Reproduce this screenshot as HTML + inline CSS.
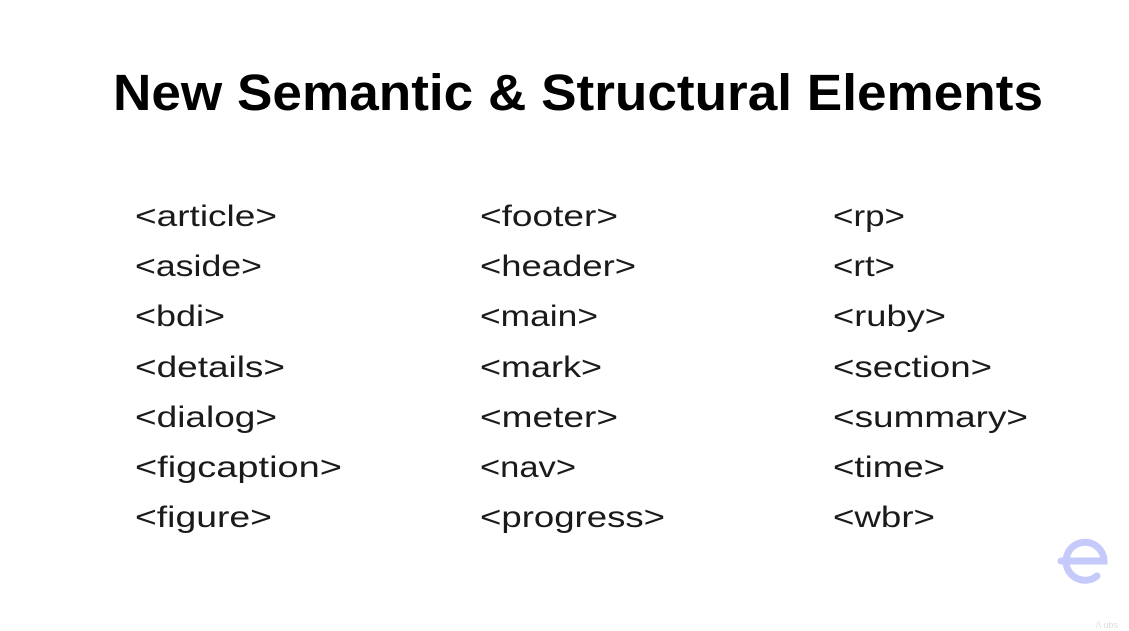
<!DOCTYPE html>
<html><head><meta charset="utf-8"><style>
html,body{margin:0;padding:0;background:#fff;width:1129px;height:631px;overflow:hidden}
svg{display:block}
text{font-family:"Liberation Sans",sans-serif}
.i{font-size:30px;fill:#1a1a1a;font-weight:normal}
</style></head><body>
<svg width="1129" height="631" viewBox="0 0 1129 631">
<text x="113" y="110" font-size="51" font-weight="bold" fill="#000" textLength="930" lengthAdjust="spacingAndGlyphs">New Semantic &amp; Structural Elements</text>
<g class="i">
<text class="i" x="135" y="226" textLength="142" lengthAdjust="spacingAndGlyphs">&lt;article&gt;</text>
<text class="i" x="135" y="276" textLength="127" lengthAdjust="spacingAndGlyphs">&lt;aside&gt;</text>
<text class="i" x="135" y="326" textLength="90" lengthAdjust="spacingAndGlyphs">&lt;bdi&gt;</text>
<text class="i" x="135" y="377" textLength="150" lengthAdjust="spacingAndGlyphs">&lt;details&gt;</text>
<text class="i" x="135" y="427" textLength="142" lengthAdjust="spacingAndGlyphs">&lt;dialog&gt;</text>
<text class="i" x="135" y="477" textLength="207" lengthAdjust="spacingAndGlyphs">&lt;figcaption&gt;</text>
<text class="i" x="135" y="527" textLength="137" lengthAdjust="spacingAndGlyphs">&lt;figure&gt;</text>

<text class="i" x="480" y="226" textLength="138" lengthAdjust="spacingAndGlyphs">&lt;footer&gt;</text>
<text class="i" x="480" y="276" textLength="156" lengthAdjust="spacingAndGlyphs">&lt;header&gt;</text>
<text class="i" x="480" y="326" textLength="118" lengthAdjust="spacingAndGlyphs">&lt;main&gt;</text>
<text class="i" x="480" y="377" textLength="122" lengthAdjust="spacingAndGlyphs">&lt;mark&gt;</text>
<text class="i" x="480" y="427" textLength="138" lengthAdjust="spacingAndGlyphs">&lt;meter&gt;</text>
<text class="i" x="480" y="477" textLength="96" lengthAdjust="spacingAndGlyphs">&lt;nav&gt;</text>
<text class="i" x="480" y="527" textLength="185" lengthAdjust="spacingAndGlyphs">&lt;progress&gt;</text>

<text class="i" x="833" y="226" textLength="72" lengthAdjust="spacingAndGlyphs">&lt;rp&gt;</text>
<text class="i" x="833" y="276" textLength="62" lengthAdjust="spacingAndGlyphs">&lt;rt&gt;</text>
<text class="i" x="833" y="326" textLength="113" lengthAdjust="spacingAndGlyphs">&lt;ruby&gt;</text>
<text class="i" x="833" y="377" textLength="159" lengthAdjust="spacingAndGlyphs">&lt;section&gt;</text>
<text class="i" x="833" y="427" textLength="195" lengthAdjust="spacingAndGlyphs">&lt;summary&gt;</text>
<text class="i" x="833" y="477" textLength="112" lengthAdjust="spacingAndGlyphs">&lt;time&gt;</text>
<text class="i" x="833" y="527" textLength="102" lengthAdjust="spacingAndGlyphs">&lt;wbr&gt;</text>
</g>
<g fill="none" stroke="#c6cafb" stroke-width="7" stroke-linecap="round">
<path d="M1061 561 H1104 A19 19 0 1 0 1097 576"/>
</g>
<text x="1096" y="628" font-size="9" fill="#ddd">/\ ubs</text>
</svg>
</body></html>
